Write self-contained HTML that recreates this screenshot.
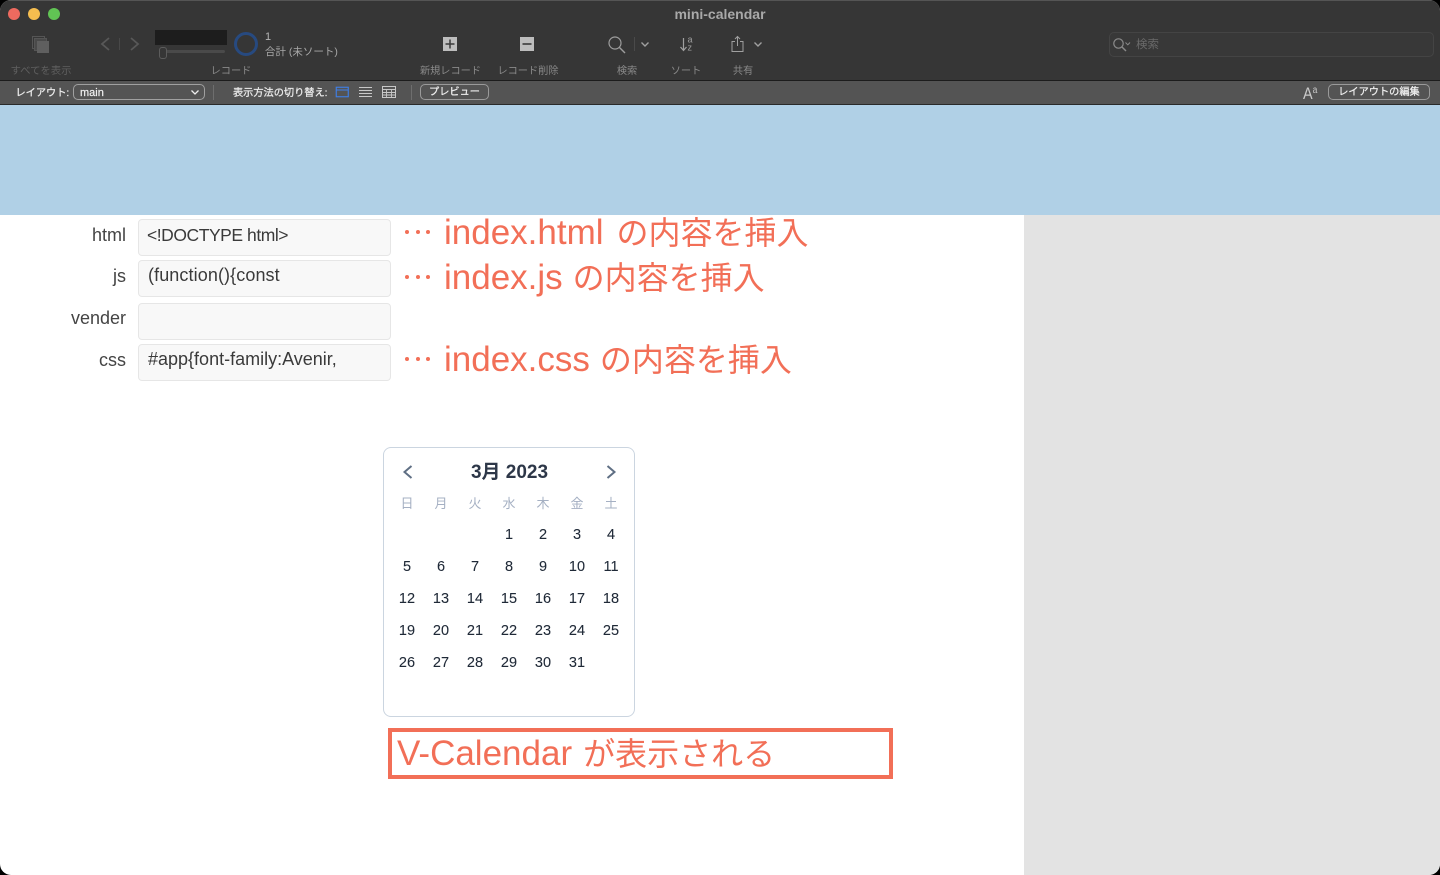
<!DOCTYPE html>
<html lang="ja">
<head>
<meta charset="utf-8">
<title>mini-calendar</title>
<style>
html,body{margin:0;padding:0;width:1440px;height:875px;overflow:hidden;background:#000}
body{font-family:"Liberation Sans","Noto Sans CJK JP",sans-serif;position:relative}
#w{position:absolute;left:0;top:0;width:1440px;height:875px;border-radius:11px;overflow:hidden;background:#fff}
.a{position:absolute;white-space:nowrap}
.c{transform:translateX(-50%);text-align:center}
.r{text-align:right}
.lbl{font-size:10.2px;line-height:14px;color:#8a8a8a;top:65px}
.lbl.dim{color:#5f5f5f}
.sm{font-size:10.2px;line-height:14px;color:#ececec;top:87px;-webkit-text-stroke:.25px #ececec}
.pill{border:1px solid #9a9a9a;border-radius:5px;box-sizing:border-box;height:16px;top:84px;font-size:10.2px;line-height:16px;color:#f0f0f0;text-align:center;-webkit-text-stroke:.25px #f0f0f0}
.f{left:138px;width:253px;height:37px;box-sizing:border-box;background:#f8f8f8;border:1px solid #e6e6e6;border-radius:4px}
.fl{font-size:18px;line-height:22px;color:#444;right:1314px}
.fv{font-size:18px;line-height:22px;color:#3a3a3a}
.o{color:#f26f57;font-size:32px;line-height:40px;left:444px}
.l{font-weight:400;font-size:35px}
.dots{left:404px;width:28px;height:4px}
.dots i{position:absolute;top:0;width:4px;height:4px;border-radius:50%;background:#f26f57}
.wd{font-size:13px;line-height:16px;color:#a5b0c3;top:496px}
.d{font-size:14.5px;line-height:18px;color:#1f2937;transform:translateX(-50%);font-weight:400;-webkit-text-stroke:.1px #1f2937}
</style>
</head>
<body>
<div id="w">
  <!-- title bar -->
  <div class="a" style="left:0;top:0;width:1440px;height:81px;background:#363636;border-top:1px solid #555;box-sizing:border-box"></div>
  <div class="a" style="left:0;top:80px;width:1440px;height:1px;background:#1c1c1c"></div>
  <div class="a" style="left:8px;top:8px;width:12px;height:12px;border-radius:50%;background:#ee6a5f"></div>
  <div class="a" style="left:28px;top:8px;width:12px;height:12px;border-radius:50%;background:#f5bd4f"></div>
  <div class="a" style="left:48px;top:8px;width:12px;height:12px;border-radius:50%;background:#61c454"></div>
  <div class="a c" style="left:720px;top:5.5px;font-size:14px;line-height:16px;font-weight:700;color:#a9a9a9">mini-calendar</div>

  <!-- show all icon -->
  <svg class="a" style="left:30px;top:34px" width="22" height="20" viewBox="0 0 22 20">
    <rect x="2.5" y="2.5" width="12" height="12" fill="none" stroke="#555" stroke-width="1"/>
    <rect x="4.5" y="4.5" width="12" height="12" fill="#4a4a4a" stroke="#555" stroke-width="1"/>
    <rect x="7" y="7" width="12" height="12" fill="#5f5f5f"/>
  </svg>
  <div class="a c lbl dim" style="left:41px;font-size:10.4px">すべてを表示</div>

  <!-- nav -->
  <svg class="a" style="left:98px;top:36px" width="46" height="16" viewBox="0 0 46 16" fill="none">
    <path d="M11 2 L4 8 L11 14" stroke="#585858" stroke-width="1.8"/>
    <path d="M21.5 2 V14" stroke="#484848" stroke-width="1"/>
    <path d="M33 2 L40 8 L33 14" stroke="#585858" stroke-width="1.8"/>
  </svg>

  <!-- record box -->
  <div class="a" style="left:155px;top:30px;width:72px;height:15px;background:#1d1d1d"></div>
  <div class="a" style="left:160px;top:50px;width:65px;height:3px;background:#4a4a4a;border-radius:2px"></div>
  <div class="a" style="left:159px;top:47px;width:6px;height:10px;background:#363636;border:1px solid #5c5c5c;border-radius:3px;box-sizing:content-box"></div>
  <div class="a" style="left:234px;top:32px;width:24px;height:24px;box-sizing:border-box;border:3px solid #274a80;border-radius:50%"></div>
  <div class="a" style="left:265px;top:30px;font-size:11px;line-height:14px;color:#b5b5b5">1</div>
  <div class="a" style="left:265px;top:44.5px;font-size:10.5px;line-height:14px;color:#a8a8a8">合計 (未ソート)</div>
  <div class="a c lbl" style="left:231px">レコード</div>

  <!-- new / delete -->
  <svg class="a" style="left:443px;top:37px" width="14" height="14" viewBox="0 0 14 14"><rect width="14" height="14" fill="#bdbdbd"/><path d="M7 2.5V11.5M2.5 7H11.5" stroke="#3a3a3a" stroke-width="1.5"/></svg>
  <div class="a c lbl" style="left:450.5px">新規レコード</div>
  <svg class="a" style="left:520px;top:37px" width="14" height="14" viewBox="0 0 14 14"><rect width="14" height="14" fill="#bdbdbd"/><path d="M2.5 7H11.5" stroke="#3a3a3a" stroke-width="1.6"/></svg>
  <div class="a c lbl" style="left:528px">レコード削除</div>

  <!-- search -->
  <svg class="a" style="left:607px;top:35px" width="20" height="20" viewBox="0 0 20 20" fill="none"><circle cx="8" cy="8" r="6" stroke="#9d9d9d" stroke-width="1.2"/><path d="M12.5 12.5L18 18" stroke="#9d9d9d" stroke-width="1.4"/></svg>
  <div class="a" style="left:634px;top:37px;width:1px;height:14px;background:#4a4a4a"></div>
  <svg class="a" style="left:640px;top:41px" width="10" height="7" viewBox="0 0 10 7" fill="none"><path d="M1.5 1.5L5 5L8.5 1.5" stroke="#a0a0a0" stroke-width="1.4"/></svg>
  <div class="a c lbl" style="left:627px">検索</div>

  <!-- sort -->
  <svg class="a" style="left:679px;top:36px" width="16" height="16" viewBox="0 0 16 16" fill="none"><path d="M4.5 2V14M1.5 11L4.5 14.5L7.5 11" stroke="#a0a0a0" stroke-width="1.2"/><text x="8.5" y="6.5" font-size="9" fill="#a0a0a0" font-family="Liberation Sans">a</text><text x="8.5" y="14.5" font-size="9" fill="#a0a0a0" font-family="Liberation Sans">z</text></svg>
  <div class="a c lbl" style="left:686px">ソート</div>

  <!-- share -->
  <svg class="a" style="left:730px;top:35px" width="16" height="18" viewBox="0 0 16 18" fill="none"><path d="M5 6.5H2V16.5H13V6.5H10" stroke="#a0a0a0" stroke-width="1"/><path d="M7.5 11V1.5M5 4L7.5 1.5L10 4" stroke="#a0a0a0" stroke-width="1"/></svg>
  <svg class="a" style="left:753px;top:41px" width="10" height="7" viewBox="0 0 10 7" fill="none"><path d="M1.5 1.5L5 5L8.5 1.5" stroke="#a0a0a0" stroke-width="1.4"/></svg>
  <div class="a c lbl" style="left:743px">共有</div>

  <!-- search field -->
  <div class="a" style="left:1109px;top:32px;width:325px;height:25px;box-sizing:border-box;border:1px solid #444;border-radius:5px;background:#383838"></div>
  <svg class="a" style="left:1112px;top:37px" width="20" height="15" viewBox="0 0 20 15" fill="none"><circle cx="6.5" cy="6.5" r="4.7" stroke="#8a8a8a" stroke-width="1.2"/><path d="M10 10L14 14" stroke="#8a8a8a" stroke-width="1.4"/><path d="M13.5 5.5L15.8 7.8L18 5.5" stroke="#8a8a8a" stroke-width="1"/></svg>
  <div class="a" style="left:1136px;top:38px;font-size:11.5px;line-height:15px;color:#6a6a6a">検索</div>

  <!-- layout bar -->
  <div class="a" style="left:0;top:81px;width:1440px;height:24px;background:#545454"></div>
  <div class="a" style="left:0;top:104px;width:1440px;height:1px;background:#2a2a2a"></div>
  <div class="a sm" style="left:15.5px">レイアウト:</div>
  <div class="a" style="left:73px;top:84px;width:132px;height:16px;box-sizing:border-box;border:1px solid #a0a0a0;border-radius:5px"></div>
  <div class="a" style="left:80px;top:86px;font-size:11px;line-height:14px;color:#f0f0f0;-webkit-text-stroke:.2px #f0f0f0">main</div>
  <svg class="a" style="left:190px;top:89px" width="10" height="7" viewBox="0 0 10 7" fill="none"><path d="M1.5 1.5L5 5L8.5 1.5" stroke="#eee" stroke-width="1.3"/></svg>
  <div class="a" style="left:213px;top:85px;width:1px;height:15px;background:#6e6e6e"></div>
  <div class="a sm" style="left:233px">表示方法の切り替え:</div>
  <svg class="a" style="left:335px;top:86px" width="14" height="12" viewBox="0 0 14 12" fill="none"><rect x="1.25" y="1.25" width="12" height="9.5" stroke="#3f80ea" stroke-width="1.1"/><path d="M1 4H13" stroke="#3f80ea" stroke-width="1"/></svg>
  <svg class="a" style="left:358px;top:86px" width="14" height="12" viewBox="0 0 14 12" fill="none"><path d="M1 1.5H14M1 4.5H14M1 7.5H14M1 10.5H14" stroke="#c8c8c8" stroke-width="1"/></svg>
  <svg class="a" style="left:382px;top:86px" width="14" height="12" viewBox="0 0 14 12" fill="none"><rect x=".5" y=".5" width="13" height="11" stroke="#c8c8c8"/><path d="M.5 3.5H13.5M.5 6.5H13.5M.5 9H13.5M4.5 3.5V11.5M9.5 3.5V11.5" stroke="#c8c8c8" stroke-width=".9"/></svg>
  <div class="a" style="left:411px;top:85px;width:1px;height:15px;background:#6e6e6e"></div>
  <div class="a pill" style="left:420px;width:69px">プレビュー</div>
  <div class="a" style="left:1303px;top:81px;font-size:17px;line-height:19px;color:#c9c9c9;transform:scaleX(.85);transform-origin:left center">A<span style="font-size:10px;vertical-align:6px">a</span></div>
  <div class="a pill" style="left:1328px;width:102px">レイアウトの編集</div>

  <!-- blue header -->
  <div class="a" style="left:0;top:105px;width:1440px;height:110px;background:#b0d0e6"></div>
  <!-- right gray -->
  <div class="a" style="left:1024px;top:215px;width:416px;height:660px;background:#e3e3e3"></div>

  <!-- fields -->
  <div class="a fl r" style="top:224px">html</div>
  <div class="a f" style="top:219px"></div>
  <div class="a fv" style="left:147px;top:224px;font-size:17.5px;letter-spacing:-.45px">&lt;!DOCTYPE html&gt;</div>

  <div class="a fl r" style="top:265px">js</div>
  <div class="a f" style="top:260px"></div>
  <div class="a fv" style="left:148px;top:264px;letter-spacing:.1px">(function(){const</div>

  <div class="a fl r" style="top:307px">vender</div>
  <div class="a f" style="top:303px"></div>

  <div class="a fl r" style="top:349px">css</div>
  <div class="a f" style="top:344px"></div>
  <div class="a fv" style="left:148px;top:348px">#app{font-family:Avenir,</div>

  <!-- annotations -->
  <div class="a dots" style="top:230px"><i style="left:1px"></i><i style="left:11.5px"></i><i style="left:22px"></i></div>
  <div class="a o" style="top:213px"><span class="l">index.html</span><span style="margin-left:13px">の内容を挿入</span></div>
  <div class="a dots" style="top:275px"><i style="left:1px"></i><i style="left:11.5px"></i><i style="left:22px"></i></div>
  <div class="a o" style="top:258px"><span class="l">index.js</span><span style="margin-left:10px">の内容を挿入</span></div>
  <div class="a dots" style="top:357px"><i style="left:1px"></i><i style="left:11.5px"></i><i style="left:22px"></i></div>
  <div class="a o" style="top:340px"><span class="l">index.css</span><span style="margin-left:10px">の内容を挿入</span></div>

  <!-- calendar -->
  <div class="a" style="left:383px;top:447px;width:252px;height:270px;box-sizing:border-box;border:1px solid #cbd5e0;border-radius:8px;background:#fff"></div>
  <svg class="a" style="left:400px;top:463px" width="16" height="18" viewBox="0 0 16 18" fill="none"><path d="M11.5 3L4.5 9L11.5 15" stroke="#5f6f84" stroke-width="2"/></svg>
  <svg class="a" style="left:602.5px;top:463px" width="16" height="18" viewBox="0 0 16 18" fill="none"><path d="M4.5 3L11.5 9L4.5 15" stroke="#5f6f84" stroke-width="2"/></svg>
  <div class="a c" style="left:509.5px;top:461px;font-size:19px;line-height:24px;font-weight:700;color:#2d3748">3月 2023</div>

  <div class="a wd c" style="left:407px">日</div>
  <div class="a wd c" style="left:441px">月</div>
  <div class="a wd c" style="left:475px">火</div>
  <div class="a wd c" style="left:509px">水</div>
  <div class="a wd c" style="left:543px">木</div>
  <div class="a wd c" style="left:577px">金</div>
  <div class="a wd c" style="left:611px">土</div>

  <div class="a d" style="left:509px;top:526px">1</div><div class="a d" style="left:543px;top:526px">2</div><div class="a d" style="left:577px;top:526px">3</div><div class="a d" style="left:611px;top:526px">4</div>

  <div class="a d" style="left:407px;top:558px">5</div><div class="a d" style="left:441px;top:558px">6</div><div class="a d" style="left:475px;top:558px">7</div><div class="a d" style="left:509px;top:558px">8</div><div class="a d" style="left:543px;top:558px">9</div><div class="a d" style="left:577px;top:558px">10</div><div class="a d" style="left:611px;top:558px">11</div>

  <div class="a d" style="left:407px;top:590px">12</div><div class="a d" style="left:441px;top:590px">13</div><div class="a d" style="left:475px;top:590px">14</div><div class="a d" style="left:509px;top:590px">15</div><div class="a d" style="left:543px;top:590px">16</div><div class="a d" style="left:577px;top:590px">17</div><div class="a d" style="left:611px;top:590px">18</div>

  <div class="a d" style="left:407px;top:622px">19</div><div class="a d" style="left:441px;top:622px">20</div><div class="a d" style="left:475px;top:622px">21</div><div class="a d" style="left:509px;top:622px">22</div><div class="a d" style="left:543px;top:622px">23</div><div class="a d" style="left:577px;top:622px">24</div><div class="a d" style="left:611px;top:622px">25</div>

  <div class="a d" style="left:407px;top:654px">26</div><div class="a d" style="left:441px;top:654px">27</div><div class="a d" style="left:475px;top:654px">28</div><div class="a d" style="left:509px;top:654px">29</div><div class="a d" style="left:543px;top:654px">30</div><div class="a d" style="left:577px;top:654px">31</div>

  <!-- callout -->
  <div class="a" style="left:387.5px;top:727.5px;width:505px;height:51px;box-sizing:border-box;border:4.5px solid #f26f57"></div>
  <div class="a o" style="left:397px;top:734px"><span class="l">V-Calendar</span><span style="margin-left:11px">が表示される</span></div>
</div>
</body>
</html>
